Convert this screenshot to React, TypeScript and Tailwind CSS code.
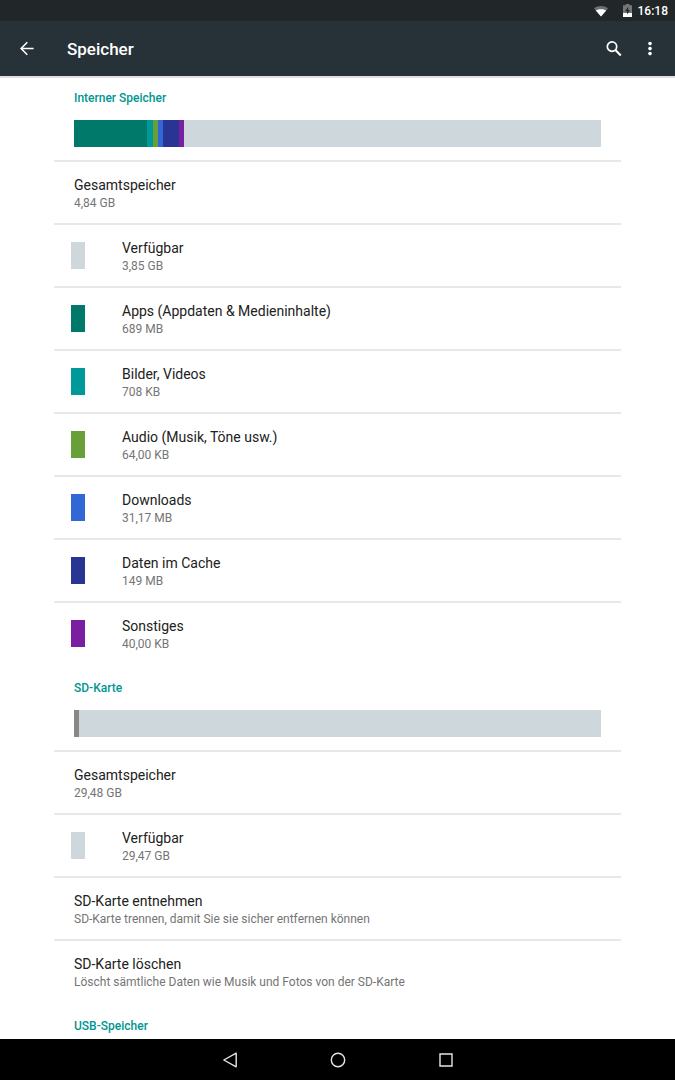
import type { ReactNode } from 'react';

type Item = { title: string; summary: string; color?: string; action?: boolean };
type Segment = { color: string; percent: number };

const internalUsage: Segment[] = [
    { color: 'bg-[#00796b]', percent: 13.9 },
    { color: 'bg-[#009999]', percent: 1 },
    { color: 'bg-[#689f38]', percent: 1 },
    { color: 'bg-[#3367d6]', percent: 1 },
    { color: 'bg-[#283593]', percent: 3 },
    { color: 'bg-[#7b1fa2]', percent: 0.9 },
];

const internalItems: Item[] = [
    { title: 'Gesamtspeicher', summary: '4,84 GB' },
    { title: 'Verfügbar', summary: '3,85 GB', color: 'bg-[#ced7db]' },
    { title: 'Apps (Appdaten & Medieninhalte)', summary: '689 MB', color: 'bg-[#00796b]', action: true },
    { title: 'Bilder, Videos', summary: '708 KB', color: 'bg-[#009999]', action: true },
    { title: 'Audio (Musik, Töne usw.)', summary: '64,00 KB', color: 'bg-[#689f38]', action: true },
    { title: 'Downloads', summary: '31,17 MB', color: 'bg-[#3367d6]', action: true },
    { title: 'Daten im Cache', summary: '149 MB', color: 'bg-[#283593]', action: true },
    { title: 'Sonstiges', summary: '40,00 KB', color: 'bg-[#7b1fa2]', action: true },
];

const sdItems: Item[] = [
    { title: 'Gesamtspeicher', summary: '29,48 GB' },
    { title: 'Verfügbar', summary: '29,47 GB', color: 'bg-[#ced7db]' },
    { title: 'SD-Karte entnehmen', summary: 'SD-Karte trennen, damit Sie sie sicher entfernen können', action: true },
    { title: 'SD-Karte löschen', summary: 'Löscht sämtliche Daten wie Musik und Fotos von der SD-Karte', action: true },
];

function StatusBar() {
    return (
        <div className="flex h-[21px] shrink-0 items-center justify-end bg-[#212629] pr-[7px] text-white">
            <svg className="mr-[14px] h-3 w-4" viewBox="0 0 16 12" aria-label="WLAN">
                <path d="M1 3.5C5 .3 11 .3 15 3.5L8 11.5Z" fill="#6c7072" />
                <path d="M2.8 5.6C5.8 3.8 10.2 3.8 13.2 5.6L8 11.5Z" fill="#fff" />
            </svg>
            <svg className="mr-[6px] h-[13px] w-[9px]" viewBox="0 0 9 13" aria-label="Akku wird geladen">
                <path d="M2.6 0h3.8v1.2H9V13H0V1.2h2.6z" fill="#74787a" />
                <path d="M0 9h9v4H0z" fill="#fff" />
                <path d="M5.2 2.8 2 7.3h2v3.2L7 6H5.2z" fill="#212629" />
            </svg>
            <span className="text-[12px] font-medium leading-4">16:18</span>
        </div>
    );
}

function AppBar() {
    return (
        <header className="z-10 flex h-[55px] shrink-0 items-center bg-[#273238] text-white shadow-[0_2px_0_#e0e0e0]">
            <button className="ml-[15px] p-1" aria-label="Zurück">
                <svg className="size-4" viewBox="0 0 16 16" fill="none" stroke="currentColor" strokeWidth="1.5">
                    <path d="M14.6 7.5H2.4M8.3 1.3 2.1 7.5l6.2 6.2" />
                </svg>
            </button>
            <h1 className="ml-7 flex-1 text-[17px] font-medium leading-6">Speicher</h1>
            <button className="p-1" aria-label="Suchen">
                <svg className="size-4" viewBox="0 0 16 16" fill="none" stroke="currentColor" strokeWidth="1.7">
                    <circle cx="6" cy="5.6" r="4.7" />
                    <path d="m9.4 9 5.4 5.4" strokeWidth="2.1" />
                </svg>
            </button>
            <button className="ml-3 mr-[13px] p-1" aria-label="Weitere Optionen">
                <svg className="size-4" viewBox="0 0 16 16" fill="currentColor">
                    <circle cx="8" cy="2.6" r="1.8" />
                    <circle cx="8" cy="7.6" r="1.8" />
                    <circle cx="8" cy="12.6" r="1.8" />
                </svg>
            </button>
        </header>
    );
}

function Category({ children }: { children: ReactNode }) {
    return <h2 className="px-5 text-[12px] font-medium leading-5 text-[#009691]">{children}</h2>;
}

function UsageBar({ segments }: { segments: Segment[] }) {
    return (
        <div className="mx-5 mb-[13px] mt-3 flex h-[27px] bg-[#ced7db]">
            {segments.map((s) => (
                <div key={s.color} className={s.color} style={{ width: `${s.percent}%` }} />
            ))}
        </div>
    );
}

function Row({ item }: { item: Item }) {
    const content = (
        <>
            {item.color && <span className={`mr-[37px] h-[27px] w-[14px] ${item.color}`} />}
            <span className="flex flex-col pt-[3px]">
                <span className="text-[14px] leading-[18px] text-[#212121]">{item.title}</span>
                <span className="text-[12px] leading-[18px] text-[#757575]">{item.summary}</span>
            </span>
        </>
    );
    const padding = item.color ? 'pl-[17px]' : 'pl-5';
    return (
        <li className="border-t-2 border-[#e8e8e8]">
            {item.action ? (
                <button className={`flex h-[61px] w-full items-center pr-5 text-left ${padding}`}>{content}</button>
            ) : (
                <div className={`flex h-[61px] items-center pr-5 ${padding}`}>{content}</div>
            )}
        </li>
    );
}

function NavBar() {
    return (
        <nav className="flex h-[41px] shrink-0 items-center justify-center bg-black text-[#e6e6e6]">
            <button className="flex w-[16%] justify-center" aria-label="Zurück">
                <svg className="size-4" viewBox="0 0 16 16" fill="none" stroke="currentColor" strokeWidth="1.4">
                    <path d="M14.2 1.2v13.6L1.8 8z" strokeLinejoin="round" />
                </svg>
            </button>
            <button className="flex w-[16%] justify-center" aria-label="Startbildschirm">
                <svg className="size-4" viewBox="0 0 16 16" fill="none" stroke="currentColor" strokeWidth="1.4">
                    <circle cx="8" cy="8" r="6.7" />
                </svg>
            </button>
            <button className="flex w-[16%] justify-center" aria-label="Letzte Apps">
                <svg className="size-4" viewBox="0 0 16 16" fill="none" stroke="currentColor" strokeWidth="1.4">
                    <path d="M2 2h12v12H2z" />
                </svg>
            </button>
        </nav>
    );
}

export default function App() {
    return (
        <div className="flex h-screen flex-col bg-white font-[Roboto,sans-serif]">
            <StatusBar />
            <AppBar />
            <main className="min-h-0 flex-1 overflow-y-auto px-[8%] [scrollbar-width:none]">
                <section className="pt-3">
                    <Category>Interner Speicher</Category>
                    <UsageBar segments={internalUsage} />
                    <ul>
                        {internalItems.map((item) => (
                            <Row key={item.title} item={item} />
                        ))}
                    </ul>
                </section>
                <section className="pt-[14px]">
                    <Category>SD-Karte</Category>
                    <UsageBar segments={[{ color: 'bg-[#888888]', percent: 1 }]} />
                    <ul>
                        {sdItems.map((item) => (
                            <Row key={item.title} item={item} />
                        ))}
                    </ul>
                </section>
                <section className="pt-[14px]">
                    <Category>USB-Speicher</Category>
                </section>
            </main>
            <NavBar />
        </div>
    );
}
